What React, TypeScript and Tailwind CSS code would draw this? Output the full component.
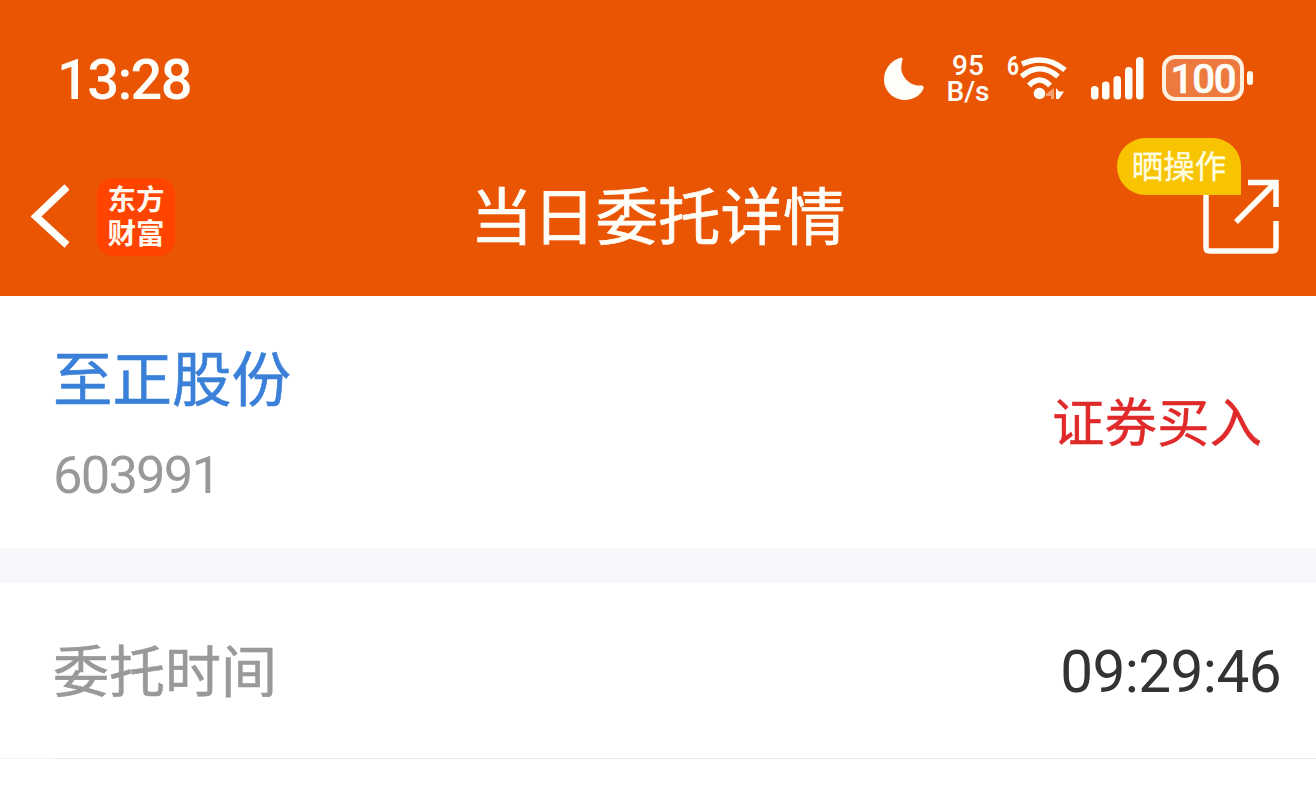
// ------------------------ Status bar icons ------------------------
function MoonIcon() {
  return (
    <svg width="40" height="44" viewBox="0 0 40 44" fill="#fffdf8">
      <path d="M18.500 2.500C19 1 18 .3 16.500 .8C7 3.500 0 12 0 22.500C0 34 9.500 43 21 43C29.500 43 37 38 39.500 31.500C40.200 29.500 39 28.300 37 28.500C26.500 29.500 15.500 19 17.500 8C17.800 6 18 4 18.500 2.500Z" />
    </svg>
  );
}

function WifiIcon() {
  return (
    <svg
      className="overflow-visible"
      width="60"
      height="48"
      viewBox="0 0 60 48"
      fill="none"
    >
      <text
        x="0"
        y="21"
        fontSize="26"
        fontWeight="700"
        fontFamily="Roboto, sans-serif"
        fill="#fffaf0"
        textLength="12"
        lengthAdjust="spacingAndGlyphs"
      >
        6
      </text>
      <g stroke="#fffdf8" strokeWidth="5.500">
        <path d="M15 10Q38 -.5 58 16" />
        <path d="M14.500 22.500Q33 7 51 22.500" />
        <path d="M22 31.500Q32.500 20.500 43 31.500" />
      </g>
      <circle cx="32.500" cy="39.500" r="5.800" fill="#fffdf8" />
      <path d="M47 34V45H44V42H39V40Z" fill="#f3a06c" />
      <path d="M49 34L52 37.500H57L52 45H49Z" fill="#fffdf8" />
    </svg>
  );
}

function SignalIcon() {
  return (
    <svg width="54" height="44" viewBox="0 0 54 44" fill="#fffdf8">
      <rect x="0" y="29" width="7.500" height="13.500" rx="3.500" />
      <rect x="11" y="24.500" width="7.500" height="18" rx="3.500" />
      <rect x="22.500" y="19" width="7.500" height="23.500" rx="3.500" />
      <rect x="34" y="10" width="7.500" height="32.500" rx="3.500" />
      <rect x="45" y="0" width="7.500" height="42.500" rx="3.500" />
    </svg>
  );
}

function StatusBar() {
  return (
    <div className="flex h-[138px] items-start justify-between pl-[57px] pr-[63px] text-[#fffdf8]">
      <span className="mt-[50px] font-['Roboto'] text-[56px] font-medium leading-[60px] tracking-[-1.6px]">
        13:28
      </span>

      <div className="flex items-start">
        <div className="mt-[57px]">
          <MoonIcon />
        </div>
        <div className="ml-[20px] mt-[53px] flex w-[48px] flex-col items-center font-['Roboto'] text-[28px] font-medium leading-[26px]">
          <span>95</span>
          <span>B/s</span>
        </div>
        <div className="ml-[15px] mt-[54px]">
          <WifiIcon />
        </div>
        <div className="ml-[24px] mt-[57px]">
          <SignalIcon />
        </div>
        <div className="ml-[17px] mt-[55px] flex items-center gap-[3px]">
          <div className="flex h-[46px] w-[82px] items-center justify-center rounded-[13px] border-4 border-[#fff0e0] bg-[#ec7a3e] pt-[3px] font-['Roboto'] text-[40px] font-medium leading-none tracking-[-1px] [-webkit-text-stroke:0.6px_#fffdf8]">
            100
          </div>
          <div className="h-[14px] w-[6px] rounded-full bg-[#fff6ec]" />
        </div>
      </div>
    </div>
  );
}

// ------------------------ Title bar ------------------------
function TitleBar() {
  return (
    <div className="relative flex h-[158px] items-start justify-between pl-[31px] pr-[37px]">
      <div className="flex items-start">
        <svg
          className="mt-[45px]"
          width="38"
          height="66"
          viewBox="0 0 38 66"
          fill="none"
          stroke="#fffdf8"
          strokeWidth="7.500"
        >
          <path d="M36 4L5 33.500L36 62" />
        </svg>
        <div className="ml-[28px] mt-[40px] flex h-[78px] w-[78px] flex-col items-center justify-center rounded-[16px] bg-[#ff4400] pb-[5px] font-['Noto_Sans_CJK_SC'] text-[28.5px] font-bold leading-[34px] text-[#fff8ee]">
          <span>东方</span>
          <span>财富</span>
        </div>
      </div>

      <h1 className="absolute inset-x-0 top-[30px] text-center font-['Noto_Sans_CJK_SC'] text-[62.5px] font-normal leading-[90px] text-[#fffdf8] [-webkit-text-stroke:0.7px_#fffdf8]">
        当日委托详情
      </h1>

      <svg
        className="mt-[40px]"
        width="76"
        height="76"
        viewBox="0 0 76 76"
        fill="none"
        stroke="#fffdf8"
        strokeWidth="5.500"
      >
        <path d="M3 10V69.500Q3 73 6.500 73H69.500Q73 73 73 69.500V43" />
        <path d="M45 4.500H73V29" />
        <path d="M72 5L33 44" />
      </svg>
      <span className="absolute right-[75px] top-0 flex h-[57px] w-[124px] items-center justify-center rounded-full rounded-br-none bg-[#f8c300] pb-[4px] font-['Noto_Sans_CJK_SC'] text-[31.5px] text-[#fffde0] [-webkit-text-stroke:0.3px_#fffde0]">
        晒操作
      </span>
    </div>
  );
}

export default function App() {
  return (
    <main className="h-[799px] w-[1316px] overflow-hidden bg-white font-['Noto_Sans_CJK_SC',sans-serif]">
      <header className="h-[296px] bg-[#ea5504]">
        <StatusBar />
        <TitleBar />
      </header>

      {/* Stock summary */}
      <section className="flex h-[252px] items-start justify-between pl-[53px] pr-[54px]">
        <div className="flex flex-col">
          <span className="mt-[37px] text-[59.5px] leading-[84px] text-[#3a80d8] [-webkit-text-stroke:0.6px_#3a80d8]">
            至正股份
          </span>
          <span className="mt-[26px] font-['Roboto'] text-[52.5px] leading-[64px] tracking-[-1.8px] text-[#999999]">
            603991
          </span>
        </div>
        <span className="mt-[85px] text-[52.5px] leading-[76px] text-[#e02a2a] [-webkit-text-stroke:0.4px_#e02a2a]">
          证券买入
        </span>
      </section>

      <div className="h-[35px] bg-[#f5f7fb]" />

      {/* Order time */}
      <section className="flex h-[175px] items-start justify-between pl-[53px] pr-[35px]">
        <span className="mt-[45px] text-[56px] leading-[80px] text-[#999999] [-webkit-text-stroke:0.6px_#999999]">
          委托时间
        </span>
        <span className="mt-[54px] font-['Roboto'] text-[58.5px] leading-[70px] tracking-[-0.6px] text-[#333333]">
          09:29:46
        </span>
      </section>
      <div className="flex">
        <div className="h-px w-[53px] bg-[#f6f6f6]" />
        <div className="h-px flex-1 bg-[#ebebeb]" />
      </div>
    </main>
  );
}
